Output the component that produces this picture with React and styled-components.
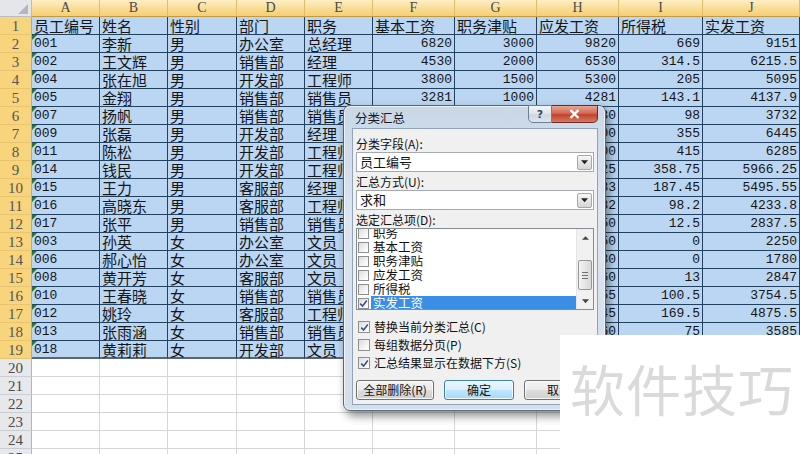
import React from "react";
import styled, { createGlobalStyle } from "styled-components";

const GlobalStyle = createGlobalStyle`
  html, body {
    margin: 0;
    padding: 0;
    background: #fff;
    overflow: hidden;
  }
  body {
    font-family: "Noto Sans CJK SC", sans-serif;
  }
`;

const COL_WIDTHS = [32, 68, 68, 69, 68, 68, 82, 82, 82, 84, 97];
const LETTERS = ["A", "B", "C", "D", "E", "F", "G", "H", "I", "J"];

const DATA = [
  ["员工编号", "姓名", "性别", "部门", "职务", "基本工资", "职务津贴", "应发工资", "所得税", "实发工资"],
  ["001", "李新", "男", "办公室", "总经理", "6820", "3000", "9820", "669", "9151"],
  ["002", "王文辉", "男", "销售部", "经理", "4530", "2000", "6530", "314.5", "6215.5"],
  ["004", "张在旭", "男", "开发部", "工程师", "3800", "1500", "5300", "205", "5095"],
  ["005", "金翔", "男", "销售部", "销售员", "3281", "1000", "4281", "143.1", "4137.9"],
  ["007", "扬帆", "男", "销售部", "销售员", "2830", "1000", "3830", "98", "3732"],
  ["009", "张磊", "男", "开发部", "经理", "4800", "2000", "6800", "355", "6445"],
  ["011", "陈松", "男", "开发部", "工程师", "5200", "1500", "6700", "415", "6285"],
  ["014", "钱民", "男", "开发部", "工程师", "4825", "1500", "6325", "358.75", "5966.25"],
  ["015", "王力", "男", "客服部", "经理", "3683", "2000", "5683", "187.45", "5495.55"],
  ["016", "高晓东", "男", "客服部", "工程师", "2832", "1500", "4332", "98.2", "4233.8"],
  ["017", "张平", "男", "销售部", "销售员", "1850", "1000", "2850", "12.5", "2837.5"],
  ["003", "孙英", "女", "办公室", "文员", "1750", "500", "2250", "0", "2250"],
  ["006", "郝心怡", "女", "办公室", "文员", "1280", "500", "1780", "0", "1780"],
  ["008", "黄开芳", "女", "客服部", "文员", "2360", "500", "2860", "13", "2847"],
  ["010", "王春晓", "女", "销售部", "销售员", "2855", "1000", "3855", "100.5", "3754.5"],
  ["012", "姚玲", "女", "客服部", "工程师", "3545", "1500", "5045", "169.5", "4875.5"],
  ["013", "张雨涵", "女", "销售部", "销售员", "2660", "1000", "3660", "75", "3585"],
  ["018", "黄莉莉", "女", "开发部", "文员", "2100", "500", "2600", "0", "2600"],
];

const EMPTY_ROWS = [20, 21, 22, 23, 24, 25];

const LIST_ITEMS = [
  { label: "职务" },
  { label: "基本工资" },
  { label: "职务津贴" },
  { label: "应发工资" },
  { label: "所得税" },
  { label: "实发工资", checked: true, active: true },
];

const Screen = styled.div`
  position: relative;
  width: 800px;
  height: 454px;
  overflow: hidden;
  background: #fff;
`;

const Sheet = styled.div`
  display: grid;
  grid-template-columns: ${COL_WIDTHS.map((w) => w + "px").join(" ")};
  grid-template-rows: 17px;
  grid-auto-rows: 18px;
`;

const Corner = styled.div`
  box-sizing: border-box;
  display: flex;
  align-items: flex-end;
  justify-content: flex-end;
  padding: 0 3px 2px 0;
  background: #e4e6e9;
  border-right: 1px solid #b9bec6;
  border-bottom: 1px solid #b9bec6;
`;

const ColHead = styled.div`
  box-sizing: border-box;
  background: linear-gradient(180deg, #fdeec6 0%, #f9dc93 55%, #f5cf77 100%);
  border-right: 1px solid #e0bd6c;
  border-bottom: 1px solid #c59a3c;
  color: #4a4a4a;
  font: 14px/16px "Liberation Serif", serif;
  text-align: center;
`;

const RowHead = styled.div`
  box-sizing: border-box;
  background: ${(p) => (p.$sel ? "#f8d47c" : "#e6e8ec")};
  border-right: 1px solid ${(p) => (p.$sel ? "#d7a740" : "#a9b6c6")};
  border-bottom: 1px solid ${(p) => (p.$sel ? "#e9c46f" : "#c9ced6")};
  color: ${(p) => (p.$sel ? "#555" : "#4b4b4b")};
  font: 15px/18px "Liberation Serif", serif;
  text-align: center;
`;

const Cell = styled.div`
  position: relative;
  box-sizing: border-box;
  padding: 0 2px;
  background: ${(p) => (p.$sel ? "#bad6f2" : "#fff")};
  border-right: 1px solid ${(p) => (p.$sel ? "#22415f" : "#d6d6d6")};
  border-bottom: ${(p) =>
    p.$edge ? "2px solid #5b6470" : `1px solid ${p.$sel ? "#22415f" : "#d6d6d6"}`};
  color: #151515;
  font-family: ${(p) =>
    p.$num ? '"Liberation Mono", "Noto Sans CJK SC", monospace' : '"Noto Sans CJK SC", sans-serif'};
  font-size: ${(p) => (p.$num ? "13px" : "15px")};
  line-height: 17px;
  text-align: ${(p) => (p.$right ? "right" : "left")};
  white-space: nowrap;

  &::before {
    content: "";
    display: ${(p) => (p.$flag ? "block" : "none")};
    position: absolute;
    left: 0;
    top: 0;
    border-top: 5px solid #1f7a3a;
    border-right: 5px solid transparent;
  }
`;

/* ---------- dialog ---------- */

const Dialog = styled.div`
  position: absolute;
  left: 343px;
  top: 105px;
  width: 263px;
  height: 306px;
  box-sizing: border-box;
  display: flex;
  flex-direction: column;
  padding: 0 7px 5px 8px;
  border: 1px solid #56677c;
  border-radius: 7px;
  background: linear-gradient(180deg, #c9d7e7 0%, #dce5f0 35%, #d3deeb 100%);
  box-shadow: 3px 5px 10px rgba(0, 0, 0, 0.45), inset 0 0 0 1px rgba(255, 255, 255, 0.65);
`;

const TitleBar = styled.div`
  height: 22px;
  display: flex;
  align-items: flex-start;
  justify-content: space-between;
`;

const Title = styled.div`
  padding: 4px 0 0 3px;
  color: #1a1a1a;
  font: 12.5px/16px "Noto Sans CJK SC", sans-serif;
`;

const Caption = styled.div`
  display: flex;
  margin-top: -1px;
`;

const CapButton = styled.div`
  box-sizing: border-box;
  width: ${(p) => (p.$close ? "46px" : "24px")};
  height: 18px;
  display: flex;
  align-items: center;
  justify-content: center;
  border: 1px solid ${(p) => (p.$close ? "#6b2a2a" : "#6f7f93")};
  border-radius: ${(p) => (p.$close ? "0 0 5px 0" : "0 0 0 5px")};
  border-left-width: ${(p) => (p.$close ? "0" : "1px")};
  background: ${(p) =>
    p.$close
      ? "linear-gradient(180deg, #e8a493 0%, #d36a55 45%, #c2432c 55%, #d77a62 100%)"
      : "linear-gradient(180deg, #f2f5f9 0%, #dfe6ef 45%, #cdd7e4 55%, #dde5ee 100%)"};
  color: ${(p) => (p.$close ? "#fff" : "#3a4658")};
  font: bold 11px/1 "DejaVu Sans", sans-serif;
`;

const Panel = styled.div`
  flex: 1;
  display: flex;
  flex-direction: column;
  padding: 7px 3px 4px 3px;
  background: #f0f0f0;
  border: 1px solid #8fa3bb;
  font: 12px/16px "Noto Sans CJK SC", sans-serif;
  color: #111;
`;

const Label = styled.div`
  height: 16px;
  margin-top: ${(p) => (p.$first ? "0" : "2px")};
  white-space: nowrap;
`;

const Combo = styled.div`
  box-sizing: border-box;
  height: 20px;
  display: flex;
  align-items: center;
  justify-content: space-between;
  padding: 0 1px 0 3px;
  background: #fff;
  border: 1px solid #a3aab4;
  font-size: 13px;
`;

const DropBtn = styled.div`
  box-sizing: border-box;
  width: 15px;
  height: 15px;
  display: flex;
  align-items: center;
  justify-content: center;
  border: 1px solid #a2a8b0;
  border-radius: 2px;
  background: linear-gradient(180deg, #f7f7f7 0%, #e5e5e5 50%, #d6d6d6 100%);
`;

const ListBox = styled.div`
  box-sizing: border-box;
  height: 82px;
  display: flex;
  background: #fff;
  border: 1px solid #858b94;
  overflow: hidden;
`;

const Items = styled.div`
  flex: 1;
  margin-top: -3px;
`;

const Item = styled.div`
  height: 14px;
  display: flex;
  align-items: center;
  gap: 2px;
  padding-left: 1px;
  line-height: 14px;
`;

const ItemText = styled.div`
  flex: 1;
  padding-left: 2px;
  background: ${(p) => (p.$active ? "#3b8ee6" : "transparent")};
  color: ${(p) => (p.$active ? "#fff" : "#111")};
  font-size: 12.5px;
`;

const Box = styled.div`
  box-sizing: border-box;
  flex: none;
  width: ${(p) => (p.$small ? "11px" : "12px")};
  height: ${(p) => (p.$small ? "11px" : "12px")};
  display: flex;
  align-items: center;
  justify-content: center;
  border: 1px solid #8e8f8f;
  background: linear-gradient(135deg, #dcdcdc 0%, #f4f4f4 60%, #ffffff 100%);
`;

const ScrollBar = styled.div`
  width: 16px;
  display: flex;
  flex-direction: column;
  background: #f1f1f1;
  border-left: 1px solid #e4e4e4;
`;

const Arrow = styled.div`
  height: 16px;
  display: flex;
  align-items: center;
  justify-content: center;
`;

const Track = styled.div`
  flex: 1;
  display: flex;
  flex-direction: column;
  justify-content: flex-end;
  padding-bottom: 3px;
`;

const Thumb = styled.div`
  box-sizing: border-box;
  height: 30px;
  margin: 0 1px;
  display: flex;
  flex-direction: column;
  align-items: center;
  justify-content: center;
  gap: 2px;
  border: 1px solid #979797;
  border-radius: 2px;
  background: linear-gradient(90deg, #f3f3f3 0%, #e6e6e6 50%, #d7d7d7 100%);

  span {
    width: 6px;
    height: 1px;
    background: #6f6f6f;
  }
`;

const CheckRow = styled.div`
  height: 18px;
  margin-top: ${(p) => (p.$first ? "8px" : "0")};
  display: flex;
  align-items: center;
  gap: 4px;
  padding-left: 2px;
  font-size: 12px;
  white-space: nowrap;
`;

const ButtonRow = styled.div`
  display: flex;
  gap: 10px;
  margin-top: 8px;
`;

const Button = styled.div`
  box-sizing: border-box;
  width: ${(p) => p.$w}px;
  height: 20px;
  display: flex;
  align-items: center;
  justify-content: center;
  border: 1px solid ${(p) => (p.$focus ? "#3c7fb1" : "#707070")};
  border-radius: 3px;
  background: ${(p) =>
    p.$focus
      ? "linear-gradient(180deg, #eaf6fd 0%, #d9f0fc 50%, #bee6fd 51%, #a7d9f5 100%)"
      : "linear-gradient(180deg, #f2f2f2 0%, #ebebeb 50%, #dddddd 51%, #cfcfcf 100%)"};
  box-shadow: inset 0 0 0 1px rgba(255, 255, 255, 0.8);
  font-size: 12px;
  color: #111;
  white-space: nowrap;
`;

const Watermark = styled.div`
  position: absolute;
  left: 560px;
  top: 335px;
  width: 240px;
  height: 119px;
  box-sizing: border-box;
  padding: 25px 0 0 10px;
  background: #fff;
  color: #dadada;
  font: 55px/1 "Noto Sans CJK SC", sans-serif;
  letter-spacing: 1px;
  white-space: nowrap;
`;

const Check = ({ on, small }) => (
  <Box $small={small}>
    {on && (
      <svg width="9" height="9" viewBox="0 0 9 9">
        <path d="M1.2 4.6 L3.6 7 L7.8 1.6" fill="none" stroke="#3a4f8c" strokeWidth="1.6" />
      </svg>
    )}
  </Box>
);

const Tri = ({ up, size = 7, color = "#222" }) => (
  <svg width={size} height={Math.ceil(size / 2) + 1} viewBox="0 0 8 5">
    <path d={up ? "M0 5 L4 1 L8 5 Z" : "M0 0 L8 0 L4 4.5 Z"} fill={color} />
  </svg>
);

function SheetGrid() {
  const cells = [];
  cells.push(
    <Corner key="corner">
      <svg width="10" height="10" viewBox="0 0 10 10">
        <path d="M10 0 L10 10 L0 10 Z" fill="#b3b8c0" />
      </svg>
    </Corner>
  );
  LETTERS.forEach((l) => cells.push(<ColHead key={"h" + l}>{l}</ColHead>));

  DATA.forEach((row, r) => {
    const n = r + 1;
    cells.push(
      <RowHead key={"r" + n} $sel>
        {n}
      </RowHead>
    );
    row.forEach((v, c) => {
      const numeric = r > 0 && c >= 5;
      cells.push(
        <Cell
          key={n + "-" + c}
          $sel
          $num={numeric || (r > 0 && c === 0)}
          $right={numeric}
          $flag={r > 0 && c === 0}
          $edge={n === 19}
        >
          {v}
        </Cell>
      );
    });
  });

  EMPTY_ROWS.forEach((n) => {
    cells.push(<RowHead key={"r" + n}>{n}</RowHead>);
    LETTERS.forEach((l) => cells.push(<Cell key={n + l} />));
  });

  return <Sheet>{cells}</Sheet>;
}

function SubtotalDialog() {
  return (
    <Dialog>
      <TitleBar>
        <Title>分类汇总</Title>
        <Caption>
          <CapButton>?</CapButton>
          <CapButton $close>
            <svg width="11" height="10" viewBox="0 0 11 10">
              <path d="M1.5 1 L9.5 9 M9.5 1 L1.5 9" stroke="#fff" strokeWidth="2.4" />
            </svg>
          </CapButton>
        </Caption>
      </TitleBar>
      <Panel>
        <Label $first>分类字段(A):</Label>
        <Combo>
          员工编号
          <DropBtn>
            <Tri />
          </DropBtn>
        </Combo>
        <Label>汇总方式(U):</Label>
        <Combo>
          求和
          <DropBtn>
            <Tri />
          </DropBtn>
        </Combo>
        <Label>选定汇总项(D):</Label>
        <ListBox>
          <Items>
            {LIST_ITEMS.map((it) => (
              <Item key={it.label}>
                <Check on={it.checked} small />
                <ItemText $active={it.active}>{it.label}</ItemText>
              </Item>
            ))}
          </Items>
          <ScrollBar>
            <Arrow>
              <Tri up size={7} color="#444" />
            </Arrow>
            <Track>
              <Thumb>
                <span />
                <span />
                <span />
              </Thumb>
            </Track>
            <Arrow>
              <Tri size={7} color="#444" />
            </Arrow>
          </ScrollBar>
        </ListBox>
        <CheckRow $first>
          <Check on />
          替换当前分类汇总(C)
        </CheckRow>
        <CheckRow>
          <Check />
          每组数据分页(P)
        </CheckRow>
        <CheckRow>
          <Check on />
          汇总结果显示在数据下方(S)
        </CheckRow>
        <ButtonRow>
          <Button $w={78}>全部删除(R)</Button>
          <Button $w={70} $focus>
            确定
          </Button>
          <Button $w={70}>取消</Button>
        </ButtonRow>
      </Panel>
    </Dialog>
  );
}

export default function App() {
  return (
    <Screen>
      <GlobalStyle />
      <SheetGrid />
      <SubtotalDialog />
      <Watermark>软件技巧</Watermark>
    </Screen>
  );
}
